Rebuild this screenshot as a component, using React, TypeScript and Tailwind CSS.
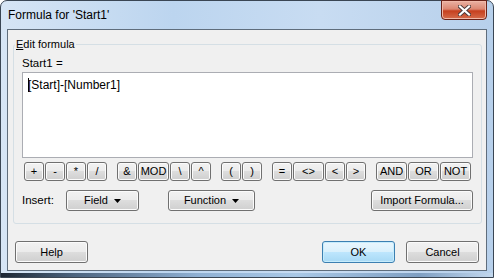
import React from 'react';

const font = "font-['Liberation_Sans',Arial,sans-serif]";
const btn =
  'flex items-center justify-center rounded-[3px] border border-[#707070] bg-[linear-gradient(to_bottom,#f2f2f2_0%,#ebebeb_50%,#dddddd_50%,#cfcfcf_100%)] shadow-[inset_0_0_0_1px_#fbfbfb] text-[11px] leading-none text-black';

const Arrow = () => (
  <svg width="7" height="4" viewBox="0 0 7 4" className="ml-[6px]">
    <path d="M0 0h7L3.5 4z" fill="#000" />
  </svg>
);

const groups: { label: string; w: number }[][] = [
  [
    { label: '+', w: 20 },
    { label: '-', w: 20 },
    { label: '*', w: 20 },
    { label: '/', w: 20 },
  ],
  [
    { label: '&', w: 20 },
    { label: 'MOD', w: 31 },
    { label: '\\', w: 20 },
    { label: '^', w: 20 },
  ],
  [
    { label: '(', w: 20 },
    { label: ')', w: 20 },
  ],
  [
    { label: '=', w: 20 },
    { label: '<>', w: 31 },
    { label: '<', w: 20 },
    { label: '>', w: 20 },
  ],
  [
    { label: 'AND', w: 31 },
    { label: 'OR', w: 31 },
    { label: 'NOT', w: 31 },
  ],
];

const App: React.FC = () => {
  return (
    <div className={`${font} w-[494px] h-[278px] overflow-hidden`}>
      <div className="flex h-full flex-col rounded-t-[7px] border border-[#3a4654] bg-[linear-gradient(to_right,#d6e5f5_0%,#bcd5ef_35%,#c8dcf2_65%,#b7d0eb_100%)] px-[6px]">
        {/* Title bar */}
        <div className="flex h-[28px] shrink-0 items-start justify-between">
          <span className="mt-[7px] pl-px text-[12px] leading-[14px] text-black">Formula for 'Start1'</span>
          <button className="-mt-px flex h-[20px] w-[46px] items-center justify-center rounded-b-[4px] border border-[#6a2218] bg-[linear-gradient(to_bottom,#eab2a4_0%,#dc8671_45%,#c6401f_55%,#d56c4c_100%)] shadow-[inset_0_0_0_1px_#f0b8a8]">
            <svg width="13" height="11" viewBox="0 0 13 11">
              <path d="M2 1.5l9 8M11 1.5l-9 8" stroke="#4a3a3a" strokeWidth="4" strokeLinecap="square" />
              <path d="M2 1.5l9 8M11 1.5l-9 8" stroke="#ffffff" strokeWidth="2.2" strokeLinecap="square" />
            </svg>
          </button>
        </div>

        {/* Client area */}
        <div className="flex h-[242px] flex-col border border-[#5f6d7c] bg-[#f0f0f0]">
          <fieldset className="ml-[5px] mt-[8px] w-[468px] rounded-[3px] border border-[#d5dfe5] pb-[12px] pl-[8px] pr-[8px] pt-[6px]">
            <legend className="-ml-[7px] px-px text-[11px] leading-[13px] text-black">
              <span className="underline">E</span>dit formula
            </legend>
            <div className="text-[11.5px] leading-[13px] text-black">Start1 =</div>
            <div className="mt-[2px] h-[86px] w-[451px] border border-[#abadb3] bg-white pl-[5px] pt-[5px]">
              <div className="flex items-center text-[12px] leading-[14px] text-black">
                <span className="-mr-px h-[14px] w-px bg-black" />
                <span>[Start]-[Number1]</span>
              </div>
            </div>

            {/* Operator buttons */}
            <div className="mt-[4px] flex gap-[10px] pl-[2px]">
              {groups.map((g, i) => (
                <div key={i} className="flex gap-px">
                  {g.map((b) => (
                    <button key={b.label} className={`${btn} h-[19px]`} style={{ width: b.w }}>
                      {b.label}
                    </button>
                  ))}
                </div>
              ))}
            </div>

            {/* Insert row */}
            <div className="mt-[9px] flex h-[21px] items-center">
              <span className="w-[44px] text-[11.5px] text-black">Insert:</span>
              <button className={`${btn} h-[21px] w-[73px]`}>
                Field
                <Arrow />
              </button>
              <button className={`${btn} ml-[29px] h-[21px] w-[87px]`}>
                Function
                <Arrow />
              </button>
              <button className={`${btn} ml-auto h-[21px] w-[102px]`}>Import Formula...</button>
            </div>
          </fieldset>

          {/* Dialog buttons */}
          <div className="mt-[17px] flex px-[7px]">
            <button className={`${btn} h-[22px] w-[73px]`}>Help</button>
            <button className="ml-auto flex h-[22px] w-[73px] items-center justify-center rounded-[3px] border border-[#3c7fb1] bg-[linear-gradient(to_bottom,#eaf6fd_0%,#d9f0fc_50%,#bee6fd_50%,#a7d9f5_100%)] shadow-[inset_0_0_0_1px_#c6ecfc] text-[11px] leading-none text-black">
              OK
            </button>
            <button className={`${btn} ml-[11px] h-[22px] w-[73px]`}>Cancel</button>
          </div>
        </div>

        {/* Bottom frame edge */}
        <div className="-mx-[6px] mt-[2px] h-[4px] bg-[linear-gradient(to_right,#1c2633_0%,#4d6580_15%,#8fb0d3_40%,#a9c8e6_60%,#7f9fc2_85%,#c3d8ee_100%)]" />
      </div>
    </div>
  );
};

export default App;
